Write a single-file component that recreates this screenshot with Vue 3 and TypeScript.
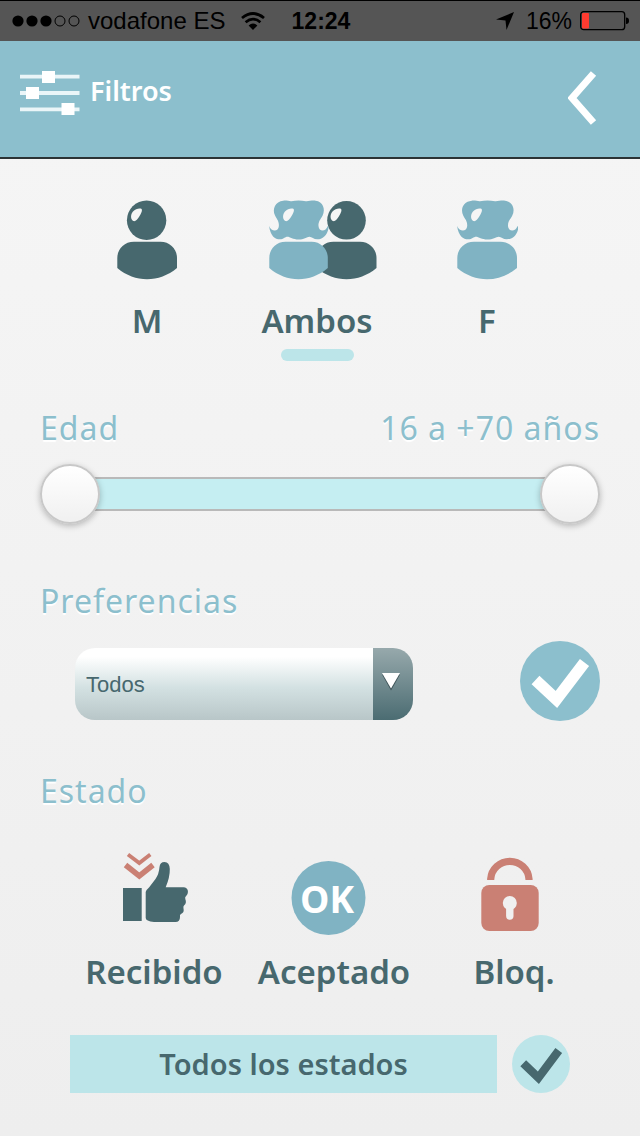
<script setup lang="ts">
import { ref, computed } from 'vue'

type Gender = 'M' | 'Ambos' | 'F'
type Status = 'Recibido' | 'Aceptado' | 'Bloq.'

const genders: Gender[] = ['M', 'Ambos', 'F']
const statuses: Status[] = ['Recibido', 'Aceptado', 'Bloq.']

const gender = ref<Gender>('Ambos')
const minAge = ref(16)
const maxAge = ref(70)
const preference = ref('Todos')
const preferenceOn = ref(true)
const allStatuses = ref(true)

const ageText = computed(() => `${minAge.value} a ${maxAge.value >= 70 ? '+70' : maxAge.value} años`)

const bodyPath = 'M.3 58C.3 49 7 41.7 17 41.7H43.5C53 41.7 60 49 60 58V68C42 83 18 83 .3 68Z'
const hairPath =
  'M14.7 .7C18 .3 21 1.4 23 1.2C28 .3 33 .3 38 1.2C41 1.4 44 .3 48 .7C55.5 1.5 58.500 9 55.3 15.500C53 20 50.800 21 51 26C51.500 32 58.500 32 60.500 26L61.5 27.500C60 36 55 39.3 49.7 39.3C46 39.3 44 36.6 41.7 36.7C39 37 36 39.5 30.3 39.5C25 39.5 21.500 36.7 19 36.7C16.500 36.7 15 39.3 11.3 39.3C6 39.3 1.500 36 .1 26C2.500 32 9.700 32 10.2 26C10.400 21 8.500 20 6.200 15.500C3 9 6.500 1.5 14.7 .7Z'
const shinePath = 'M16.3 21C13.5 19.500 13.3 14.500 16 11.500C18.300 8.800 22.500 7.800 24.300 8.800C25.800 10 24.500 13 22.300 16.500C20.500 19.500 18.500 21.800 16.3 21Z'
</script>

<template>
  <div class="screen">
    <div class="status-bar">
      <div class="carrier">
        <svg class="signal" width="68" height="12" viewBox="0 0 68 12" aria-hidden="true">
          <circle v-for="n in 3" :key="n" :cx="n * 14 - 8" cy="6" r="5.6" />
          <circle v-for="n in 2" :key="n + 3" :cx="n * 14 + 34" cy="6" r="5" fill="none" stroke="#000" />
        </svg>
        <span>vodafone ES</span>
        <svg class="wifi" width="24" height="18" viewBox="0 0 24 18" aria-hidden="true">
          <g fill="none" stroke="#000" stroke-width="2.8">
            <path d="M1 6Q12 -3 23 6" />
            <path d="M4.6 10.2Q12 4 19.4 10.2" />
          </g>
          <path d="M7.6 13.4Q12 9.4 16.4 13.4L12 18Z" />
        </svg>
      </div>
      <span class="clock">12:24</span>
      <div class="power">
        <svg width="18" height="18" viewBox="0 0 18 18" aria-hidden="true">
          <path d="M18 0L10.5 18L9.5 8.6L0 7.6Z" />
        </svg>
        <span class="percent">16%</span>
        <svg width="50" height="20" viewBox="0 0 50 20" aria-hidden="true">
          <rect x=".7" y=".7" width="44" height="18" rx="3" fill="none" stroke="#000" stroke-width="1.3" />
          <rect x="2" y="2" width="7" height="15.4" rx="1" fill="#ff3b30" />
          <path d="M46 6.5Q49 6.5 49 9.7Q49 13 46 13Z" />
        </svg>
      </div>
    </div>

    <header class="header">
      <svg width="60" height="44" viewBox="0 0 60 44" aria-hidden="true">
        <path d="M0 5.7H59.5M0 22H59.5M0 38.3H59.5" stroke="#eaf5f8" stroke-width="3.8" />
        <path d="M22 0H35V12H22ZM6 16H19V28H6ZM41.5 32H54.5V44H41.5Z" fill="#fff" />
      </svg>
      <h1 class="title">Filtros</h1>
      <button class="back" type="button" aria-label="Volver">
        <svg width="32" height="54" viewBox="0 0 32 54" aria-hidden="true">
          <path d="M25.5 2.5L4 27L25.5 51.5" fill="none" stroke="#fff" stroke-width="7" />
        </svg>
      </button>
    </header>

    <main class="content">
      <div class="genders" role="radiogroup" aria-label="Género">
        <label v-for="g in genders" :key="g" class="gender">
          <input v-model="gender" class="gender-input" type="radio" name="gender" :value="g" />
          <svg v-if="g === 'M'" width="62" height="82" viewBox="-1 -1 62 82" aria-hidden="true">
            <g fill="#47686e"><circle cx="29.6" cy="20.3" r="19.7" /><path :d="bodyPath" /></g>
            <path :d="shinePath" fill="#f5f5f5" />
          </svg>
          <svg v-else-if="g === 'Ambos'" width="120" height="82" viewBox="0 -1 120 82" aria-hidden="true">
            <g transform="translate(59.5 0)">
              <g fill="#47686e"><circle cx="30" cy="20.3" r="19.3" /><path :d="bodyPath" /></g>
              <path :d="shinePath" fill="#f5f5f5" />
            </g>
            <g transform="translate(12 0)">
              <g fill="#80b3c3"><path :d="hairPath" transform="scale(.97 1)" /><path :d="bodyPath" transform="scale(.98 1)" /></g>
              <path :d="shinePath" fill="#f5f5f5" />
            </g>
          </svg>
          <svg v-else width="62" height="82" viewBox="-1 -1 62 82" aria-hidden="true">
            <g fill="#80b3c3"><path :d="hairPath" /><path :d="bodyPath" /></g>
            <path :d="shinePath" fill="#f5f5f5" />
          </svg>
          <span class="caption">{{ g }}</span>
          <span class="marker" :class="{ active: gender === g }"></span>
        </label>
      </div>

      <section>
        <div class="section-head">
          <h2 class="section-title">Edad</h2>
          <output class="section-title">{{ ageText }}</output>
        </div>
        <div class="slider">
          <div class="track"></div>
          <input v-model.number="minAge" type="range" min="16" max="70" aria-label="Edad mínima" />
          <input v-model.number="maxAge" type="range" min="16" max="70" aria-label="Edad máxima" />
        </div>
      </section>

      <section class="preferences">
        <h2 id="preferences-title" class="section-title">Preferencias</h2>
        <div class="preference-row">
          <div class="select-box">
            <select v-model="preference" aria-labelledby="preferences-title">
              <option>Todos</option>
            </select>
            <svg class="select-arrow" width="18" height="22" viewBox="0 0 18 22" aria-hidden="true">
              <path d="M0 1.5H18L9 17.5Z" fill="#3c5156" />
              <path d="M0 0H18L9 15.5Z" fill="#fff" />
            </svg>
          </div>
          <span class="tick">
            <input v-model="preferenceOn" type="checkbox" aria-label="Aplicar preferencias" />
            <svg width="80" height="80" viewBox="0 0 80 80" aria-hidden="true">
              <circle cx="40" cy="40" r="40" fill="#8cbfcd" />
              <path v-if="preferenceOn" d="M15.5 39L36.4 58.500L64.500 21.500" fill="none" stroke="#fff" stroke-width="11.500" />
            </svg>
          </span>
        </div>
      </section>

      <section class="states">
        <h2 class="section-title">Estado</h2>
        <div class="state-list">
          <button v-for="s in statuses" :key="s" class="state" type="button">
            <svg v-if="s === 'Recibido'" width="100" height="84" viewBox="0 0 100 84" aria-hidden="true">
              <g fill="none" stroke="#ca8074">
                <path d="M24 2.5L35.3 11L46.3 2.5" stroke-width="3.8" />
                <path d="M21.5 13L35.3 24L49 13" stroke-width="5.5" />
              </g>
              <g fill="#47686e">
                <path d="M19 36H37.7V69H19Z" />
                <path d="M41.7 40Q42 38 45 35.5L51.5 27Q55 22 55.5 15Q56 10 60.5 10Q65.500 10 65.800 17Q66 25 61.700 35.300H79.500C84.500 35.500 85 41 82.500 43.500Q80.500 45 81.300 47Q83 51 80 53.500Q79 54.500 79.500 56.500Q80.500 60.500 77 62Q75.500 62.500 76 65Q76 70 71.500 70H50Q41.700 69 41.700 66Z" />
              </g>
            </svg>
            <svg v-else-if="s === 'Aceptado'" width="100" height="84" viewBox="0 0 100 84" aria-hidden="true">
              <circle cx="44.500" cy="46" r="37" fill="#80b3c3" />
              <text x="43" y="61" class="ok">OK</text>
            </svg>
            <svg v-else width="100" height="84" viewBox="0 0 100 84" aria-hidden="true">
              <path d="M26.700 28V27A19.200 19 0 0 1 65 27V28" fill="none" stroke="#ca8074" stroke-width="7.200" />
              <rect x="17.300" y="33" width="57.400" height="46" rx="8" fill="#ca8074" />
              <circle cx="45.800" cy="51" r="7" fill="#f0f0f0" />
              <path d="M45.800 53V64" stroke="#f0f0f0" stroke-width="7.400" stroke-linecap="round" />
            </svg>
            <span class="caption">{{ s }}</span>
          </button>
        </div>
        <div class="all-row">
          <label class="all-label" for="all-statuses">Todos los estados</label>
          <span class="tick">
            <input id="all-statuses" v-model="allStatuses" type="checkbox" />
            <svg width="58" height="58" viewBox="0 0 80 80" aria-hidden="true">
              <circle cx="40" cy="40" r="40" fill="#bce5e9" />
              <path v-if="allStatuses" d="M15.500 39L36.400 59L64.500 21.500" fill="none" stroke="#47686e" stroke-width="11.500" />
            </svg>
          </span>
        </div>
      </section>
    </main>
  </div>
</template>

<style>
body {
  margin: 0;
}
</style>

<style scoped>
* {
  box-sizing: border-box;
}

.screen {
  min-height: 100vh;
  background: linear-gradient(#f6f6f6, #eeeeee);
  color: #47686e;
  font-family: "Noto Sans", "Open Sans", sans-serif;
}

svg {
  display: block;
  flex: none;
}

.status-bar {
  display: grid;
  grid-template-columns: 1fr auto 1fr;
  align-items: center;
  height: 41px;
  padding: 0 10px 0 12px;
  border-top: 1px solid #000;
  background: #555;
  color: #000;
  font-family: "Liberation Sans", Arial, sans-serif;
  font-size: 24px;
  white-space: nowrap;
}

.carrier,
.power {
  display: flex;
  align-items: center;
}

.signal {
  margin-right: 8px;
}

.wifi {
  margin-left: 16px;
}

.clock {
  font-size: 23px;
  font-weight: 700;
}

.power {
  justify-content: flex-end;
}

.percent {
  margin: 0 8px 0 12px;
  font-size: 23px;
}

.header {
  display: flex;
  align-items: flex-start;
  gap: 10px;
  height: 118px;
  padding: 30px 40px 0 20px;
  border-bottom: 2px solid #2b3335;
  background: #8cbfcd;
  color: #fff;
}

.title {
  margin: 0;
  font-size: 27px;
  line-height: 40px;
  font-weight: 600;
}

.back {
  margin-left: auto;
  padding: 0;
  border: 0;
  background: none;
}

.content {
  padding: 40px 40px 43px;
}

.genders {
  display: grid;
  grid-template-columns: repeat(3, 1fr);
  padding: 0 28px 0 22px;
}

.gender {
  display: flex;
  flex-direction: column;
  align-items: center;
}

.gender-input {
  position: absolute;
  opacity: 0;
}

.caption {
  font-size: 33px;
  line-height: 40px;
  font-weight: 600;
}

.gender .caption {
  margin-top: 20px;
}

.marker {
  width: 73px;
  height: 12px;
  margin-top: 8px;
  border-radius: 6px;
}

.marker.active {
  background: #bce5e9;
}

.section-head {
  display: flex;
  justify-content: space-between;
  margin-top: 47px;
}

.section-title {
  margin: 0;
  color: #8cbfcd;
  font-size: 32px;
  line-height: 40px;
  font-weight: 400;
  letter-spacing: 1px;
  text-shadow: 0 2px 1px #fff;
}

.slider {
  display: grid;
  align-items: center;
  margin-top: 16px;
}

.slider > * {
  grid-area: 1 / 1;
}

.track {
  height: 34px;
  margin: 0 30px;
  border: 2px solid #b9b9b9;
  background: #c5eef2;
}

.slider input {
  width: 100%;
  height: 60px;
  margin: 0;
  appearance: none;
  background: none;
  pointer-events: none;
}

.slider input::-webkit-slider-thumb {
  width: 60px;
  height: 60px;
  appearance: none;
  border: 2px solid #c8c8c8;
  border-radius: 50%;
  background: linear-gradient(#fff, #f0f0f0);
  box-shadow: 0 2px 6px rgba(0, 0, 0, 0.25);
  pointer-events: auto;
}

.preferences {
  margin-top: 57px;
}

.preference-row {
  display: flex;
  align-items: flex-end;
  justify-content: space-between;
  gap: 107px;
  margin-top: 20px;
  padding-left: 35px;
}

.select-box {
  display: grid;
  flex: 1;
  grid-template-columns: 1fr 36px;
  align-items: center;
  justify-items: start;
  padding-bottom: 1px;
}

.select-box select {
  grid-area: 1 / 1 / 2 / 3;
  width: 100%;
  height: 72px;
  padding: 0 50px 0 11px;
  appearance: none;
  border: 0;
  border-radius: 20px;
  background:
    linear-gradient(#97a9ac, #4b6c72) right / 40px 100% no-repeat,
    linear-gradient(#fff 12%, #d3e1e2 55%, #b8c6c8);
  color: #47686e;
  font-family: "Liberation Sans", Arial, sans-serif;
  font-size: 22px;
}

.select-arrow {
  grid-area: 1 / 2;
  margin-left: 5px;
  pointer-events: none;
}

.tick {
  display: grid;
}

.tick > * {
  grid-area: 1 / 1;
}

.tick input {
  width: 100%;
  height: 100%;
  margin: 0;
  appearance: none;
}

.tick svg {
  pointer-events: none;
}

.states {
  margin-top: 50px;
}

.state-list {
  display: grid;
  grid-template-columns: repeat(3, 180px);
  justify-content: center;
  margin: 41px 0 0 28px;
}

.state {
  display: flex;
  flex-direction: column;
  align-items: center;
  gap: 16px;
  padding: 0;
  border: 0;
  background: none;
  color: inherit;
  font-family: inherit;
}

.ok {
  fill: #fff;
  font-family: "Open Sans", "Noto Sans", sans-serif;
  font-size: 37px;
  font-weight: 700;
  text-anchor: middle;
}

.all-row {
  display: flex;
  gap: 15px;
  margin-top: 43px;
  padding: 0 30px;
}

.all-label {
  flex: 1;
  background: #bce5e9;
  font-size: 29px;
  line-height: 58px;
  font-weight: 600;
  text-align: center;
}
</style>
